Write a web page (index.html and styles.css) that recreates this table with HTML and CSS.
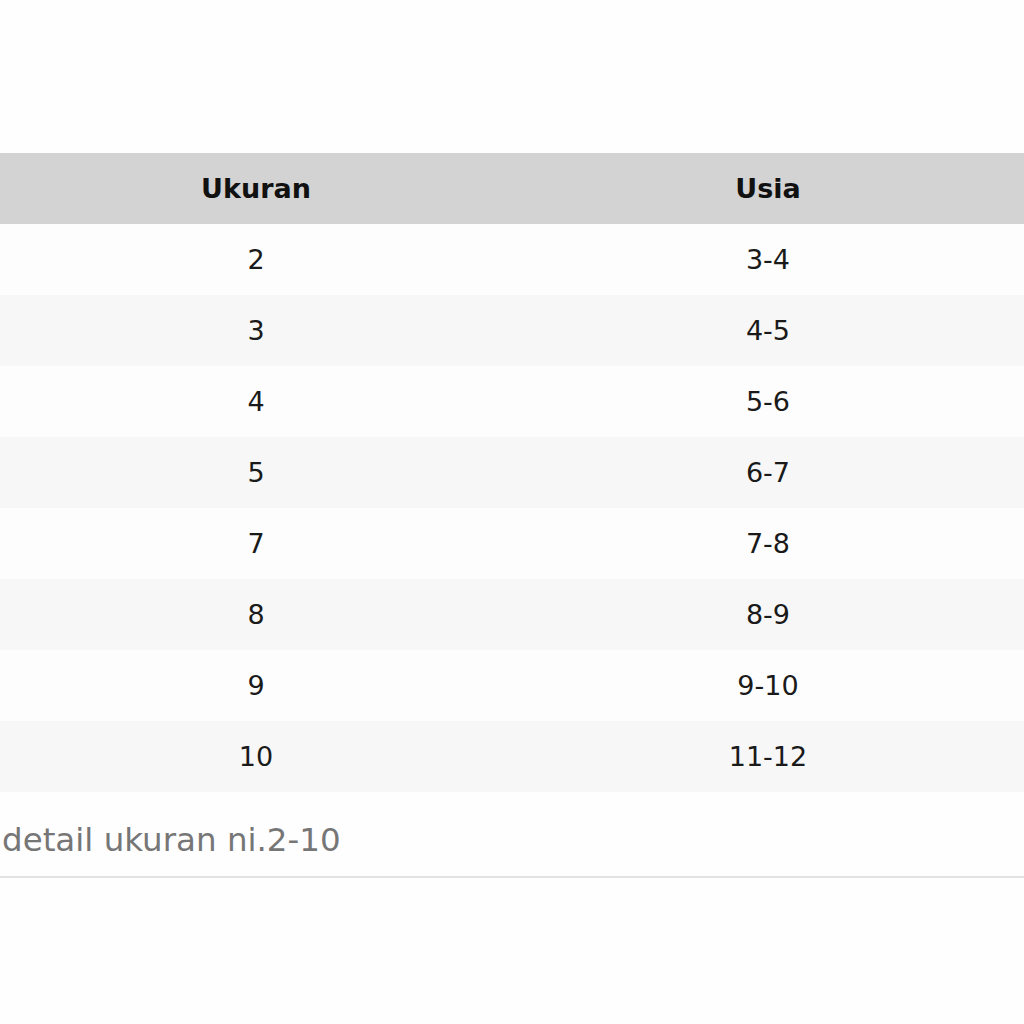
FILE: index.html
```html
<!DOCTYPE html>
<html>
<head>
<meta charset="utf-8">
<link rel="stylesheet" href="styles.css">
</head>
<body>
<div class="page">
  <table class="size-table">
    <thead>
      <tr><th>Ukuran</th><th>Usia</th></tr>
    </thead>
    <tbody>
      <tr><td>2</td><td>3-4</td></tr>
      <tr><td>3</td><td>4-5</td></tr>
      <tr><td>4</td><td>5-6</td></tr>
      <tr><td>5</td><td>6-7</td></tr>
      <tr><td>7</td><td>7-8</td></tr>
      <tr><td>8</td><td>8-9</td></tr>
      <tr><td>9</td><td>9-10</td></tr>
      <tr><td>10</td><td>11-12</td></tr>
    </tbody>
  </table>
  <div class="note">detail ukuran ni.2-10</div>
</div>
</body>
</html>
```

FILE: styles.css
```css
html, body {
  margin: 0;
  padding: 0;
  background: #fefefe;
}
.page {
  width: 1024px;
  padding-top: 153px;
  font-family: "DejaVu Sans", sans-serif;
}
.size-table {
  width: 1024px;
  border-collapse: collapse;
  table-layout: fixed;
}
.size-table th,
.size-table td {
  height: 71px;
  padding: 0;
  text-align: center;
  vertical-align: middle;
  font-size: 27px;
  color: #1a1a1a;
}
.size-table th {
  background: #d3d3d3;
  font-weight: bold;
  color: #111;
}
.size-table tbody tr:nth-child(odd) td {
  background: #fdfdfd;
}
.size-table tbody tr:nth-child(even) td {
  background: #f7f7f7;
}
.note {
  box-sizing: border-box;
  height: 86px;
  display: flex;
  align-items: center;
  padding-left: 2px;
  padding-top: 12px;
  font-size: 32.5px;
  color: #767676;
  border-bottom: 2px solid #e2e2e2;
}
```
